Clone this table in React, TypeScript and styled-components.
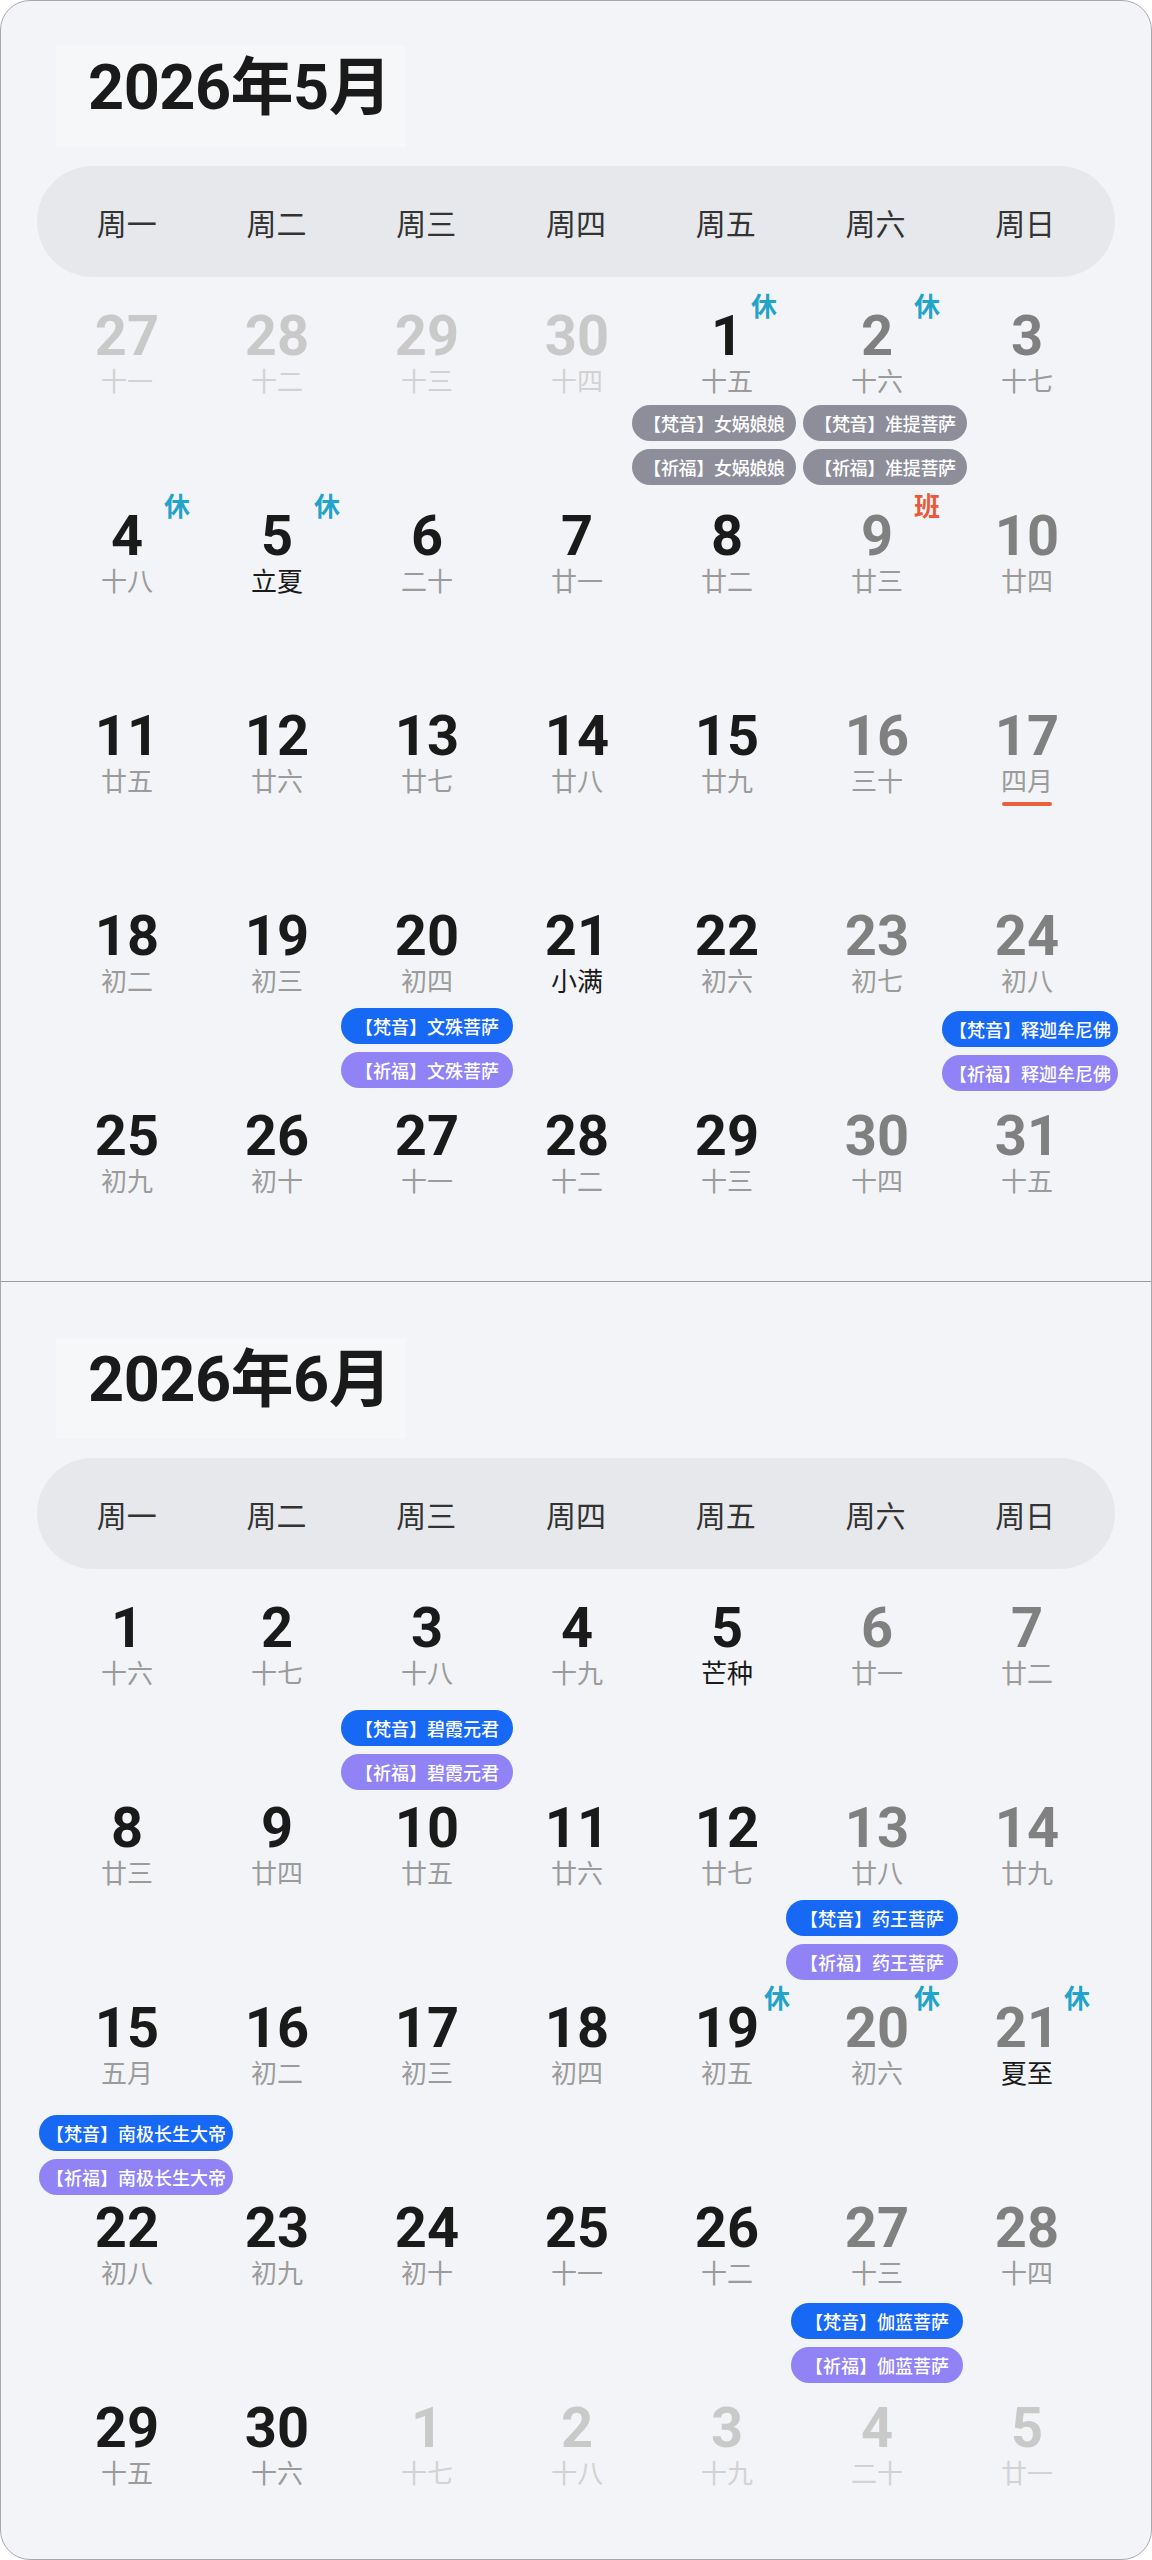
import React from 'react';
import styled, { createGlobalStyle, css } from 'styled-components';

type Kind = 'normal' | 'weekend' | 'other';
type Tone = 'fan' | 'qi' | 'past';

interface Day {
  n: number;
  lunar: string;
  kind?: Kind;
  term?: boolean;
  lunarMonth?: boolean;
  tag?: '休' | '班';
  tagX?: number;
  deity?: string;
  past?: boolean;
  shift?: number;
  dy?: number;
}

const w: Kind = 'weekend';
const o: Kind = 'other';

const may: Day[] = [
  { n: 27, lunar: '十一', kind: o },
  { n: 28, lunar: '十二', kind: o },
  { n: 29, lunar: '十三', kind: o },
  { n: 30, lunar: '十四', kind: o },
  { n: 1, lunar: '十五', tag: '休', tagX: 24, deity: '女娲娘娘', past: true, shift: -13, dy: -3 },
  { n: 2, lunar: '十六', kind: w, tag: '休', deity: '准提菩萨', past: true, shift: 8, dy: -3 },
  { n: 3, lunar: '十七', kind: w },

  { n: 4, lunar: '十八', tag: '休' },
  { n: 5, lunar: '立夏', term: true, tag: '休' },
  { n: 6, lunar: '二十' },
  { n: 7, lunar: '廿一' },
  { n: 8, lunar: '廿二' },
  { n: 9, lunar: '廿三', kind: w, tag: '班' },
  { n: 10, lunar: '廿四', kind: w },

  { n: 11, lunar: '廿五' },
  { n: 12, lunar: '廿六' },
  { n: 13, lunar: '廿七' },
  { n: 14, lunar: '廿八' },
  { n: 15, lunar: '廿九' },
  { n: 16, lunar: '三十', kind: w },
  { n: 17, lunar: '四月', kind: w, lunarMonth: true },

  { n: 18, lunar: '初二' },
  { n: 19, lunar: '初三' },
  { n: 20, lunar: '初四', deity: '文殊菩萨' },
  { n: 21, lunar: '小满', term: true },
  { n: 22, lunar: '初六' },
  { n: 23, lunar: '初七', kind: w },
  { n: 24, lunar: '初八', kind: w, deity: '释迦牟尼佛', shift: 3, dy: 3 },

  { n: 25, lunar: '初九' },
  { n: 26, lunar: '初十' },
  { n: 27, lunar: '十一' },
  { n: 28, lunar: '十二' },
  { n: 29, lunar: '十三' },
  { n: 30, lunar: '十四', kind: w },
  { n: 31, lunar: '十五', kind: w },
];

const june: Day[] = [
  { n: 1, lunar: '十六' },
  { n: 2, lunar: '十七' },
  { n: 3, lunar: '十八', deity: '碧霞元君', dy: 10 },
  { n: 4, lunar: '十九' },
  { n: 5, lunar: '芒种', term: true },
  { n: 6, lunar: '廿一', kind: w },
  { n: 7, lunar: '廿二', kind: w },

  { n: 8, lunar: '廿三' },
  { n: 9, lunar: '廿四' },
  { n: 10, lunar: '廿五' },
  { n: 11, lunar: '廿六' },
  { n: 12, lunar: '廿七' },
  { n: 13, lunar: '廿八', kind: w, deity: '药王菩萨', shift: -5 },
  { n: 14, lunar: '廿九', kind: w },

  { n: 15, lunar: '五月', lunarMonth: true, deity: '南极长生大帝', shift: 9 },
  { n: 16, lunar: '初二' },
  { n: 17, lunar: '初三' },
  { n: 18, lunar: '初四' },
  { n: 19, lunar: '初五', tag: '休' },
  { n: 20, lunar: '初六', kind: w, tag: '休' },
  { n: 21, lunar: '夏至', kind: w, term: true, tag: '休' },

  { n: 22, lunar: '初八' },
  { n: 23, lunar: '初九' },
  { n: 24, lunar: '初十' },
  { n: 25, lunar: '十一' },
  { n: 26, lunar: '十二' },
  { n: 27, lunar: '十三', kind: w, deity: '伽蓝菩萨', dy: 3 },
  { n: 28, lunar: '十四', kind: w },

  { n: 29, lunar: '十五' },
  { n: 30, lunar: '十六' },
  { n: 1, lunar: '十七', kind: o },
  { n: 2, lunar: '十八', kind: o },
  { n: 3, lunar: '十九', kind: o },
  { n: 4, lunar: '二十', kind: o },
  { n: 5, lunar: '廿一', kind: o },
];

const weekdays = ['周一', '周二', '周三', '周四', '周五', '周六', '周日'];

const GlobalStyle = createGlobalStyle`
  body {
    margin: 0;
    background: #ffffff;
    font-family: "Noto Sans CJK SC", "Noto Sans", sans-serif;
  }
`;

const Card = styled.div`
  box-sizing: border-box;
  width: 1152px;
  height: 2560px;
  border: 1.5px solid #a9a9ad;
  border-radius: 30px;
  background: #f3f4f7;
  overflow: hidden;
`;

const MonthSection = styled.section<{ $lift?: boolean }>`
  padding: 56px 0 4px;
  margin-top: ${({ $lift }) => ($lift ? '-11px' : '0')};
  border-bottom: 1px solid #9d9da1;

  &:last-child {
    border-bottom: none;
  }
`;

const TitleBox = styled.div`
  box-sizing: border-box;
  width: 350px;
  height: 101px;
  margin-left: 55px;
  padding: 10px 0 0 32px;
  background: #f6f7f9;
`;

const Title = styled.h1`
  margin: 0;
  font-family: Roboto, "Noto Sans CJK SC", sans-serif;
  font-size: 63px;
  line-height: 63px;
  font-weight: 700;
  letter-spacing: -0.5px;
  white-space: nowrap;
  color: #1a1a1a;
`;

const WeekBar = styled.div`
  display: grid;
  grid-template-columns: repeat(7, 1fr);
  align-items: center;
  height: 111px;
  margin: 19px 36px 0;
  padding: 0 15px;
  border-radius: 56px;
  background: #e7e8eb;
`;

const WeekLabel = styled.div`
  text-align: center;
  font-size: 30px;
  font-weight: 400;
  color: #333333;
`;

const DayGrid = styled.div`
  display: grid;
  grid-template-columns: repeat(7, 150px);
  grid-auto-rows: 200px;
  margin: 0 51px;
`;

const Cell = styled.div`
  position: relative;
  display: flex;
  flex-direction: column;
  align-items: center;
  padding-top: 31px;
`;

const numColor: Record<Kind, string> = {
  normal: '#1a1a1a',
  weekend: '#808080',
  other: '#c9c9c9',
};

const Num = styled.div<{ $kind: Kind }>`
  font-family: Roboto, "Noto Sans", sans-serif;
  font-size: 56px;
  line-height: 56px;
  font-weight: 700;
  color: ${({ $kind }) => numColor[$kind]};
`;

const Lunar = styled.div<{ $kind: Kind; $term?: boolean }>`
  margin-top: 1px;
  font-size: 26px;
  line-height: 30px;
  white-space: nowrap;
  color: ${({ $kind, $term }) =>
    $term ? '#1a1a1a' : $kind === 'other' ? '#d2d2d2' : '#9b9b9b'};
`;

const MonthMark = styled.div`
  width: 50px;
  height: 4px;
  margin: 7px 0 8px;
  border-radius: 2px;
  background: #e8603c;
`;

const Badge = styled.span<{ $work?: boolean; $x: number }>`
  position: absolute;
  top: 15px;
  left: calc(50% + ${({ $x }) => $x}px);
  font-size: 26px;
  line-height: 26px;
  font-weight: 700;
  color: ${({ $work }) => ($work ? '#e85a3a' : '#22a3c9')};
`;

const Events = styled.div<{ $shift: number; $dy: number }>`
  display: flex;
  flex-direction: column;
  align-items: center;
  gap: 8px;
  margin-top: ${({ $dy }) => 13 + $dy}px;
  transform: translateX(${({ $shift }) => $shift}px);
`;

const toneBg: Record<Tone, string> = {
  fan: '#1668f5',
  qi: '#9182f5',
  past: '#8e8e9b',
};

const Pill = styled.div<{ $tone: Tone }>`
  box-sizing: border-box;
  height: 36px;
  min-width: ${({ $tone }) => ($tone === 'past' ? '164px' : '172px')};
  padding: 0 7px;
  border-radius: 18px;
  background: ${({ $tone }) => toneBg[$tone]};
  color: #ffffff;
  font-size: 18px;
  line-height: 36px;
  font-weight: 500;
  text-align: center;
  white-space: nowrap;
  ${({ $tone }) =>
    $tone === 'past' &&
    css`
      letter-spacing: -0.3px;
    `}
`;

function DayCell({ day }: { day: Day }) {
  const kind = day.kind ?? 'normal';
  return (
    <Cell>
      {day.tag && (
        <Badge $work={day.tag === '班'} $x={day.tagX ?? 37}>
          {day.tag}
        </Badge>
      )}
      <Num $kind={kind}>{day.n}</Num>
      <Lunar $kind={kind} $term={day.term}>
        {day.lunar}
      </Lunar>
      {day.lunarMonth && <MonthMark />}
      {day.deity && (
        <Events $shift={day.shift ?? 0} $dy={day.dy ?? 0}>
          <Pill $tone={day.past ? 'past' : 'fan'}>【梵音】{day.deity}</Pill>
          <Pill $tone={day.past ? 'past' : 'qi'}>【祈福】{day.deity}</Pill>
        </Events>
      )}
    </Cell>
  );
}

function Month({ title, days, lift }: { title: string; days: Day[]; lift?: boolean }) {
  return (
    <MonthSection $lift={lift}>
      <TitleBox>
        <Title>{title}</Title>
      </TitleBox>
      <WeekBar>
        {weekdays.map((d) => (
          <WeekLabel key={d}>{d}</WeekLabel>
        ))}
      </WeekBar>
      <DayGrid>
        {days.map((day, i) => (
          <DayCell key={i} day={day} />
        ))}
      </DayGrid>
    </MonthSection>
  );
}

export default function App(): JSX.Element {
  return (
    <>
      <GlobalStyle />
      <Card>
        <Month title="2026年5月" days={may} lift />
        <Month title="2026年6月" days={june} />
      </Card>
    </>
  );
}
